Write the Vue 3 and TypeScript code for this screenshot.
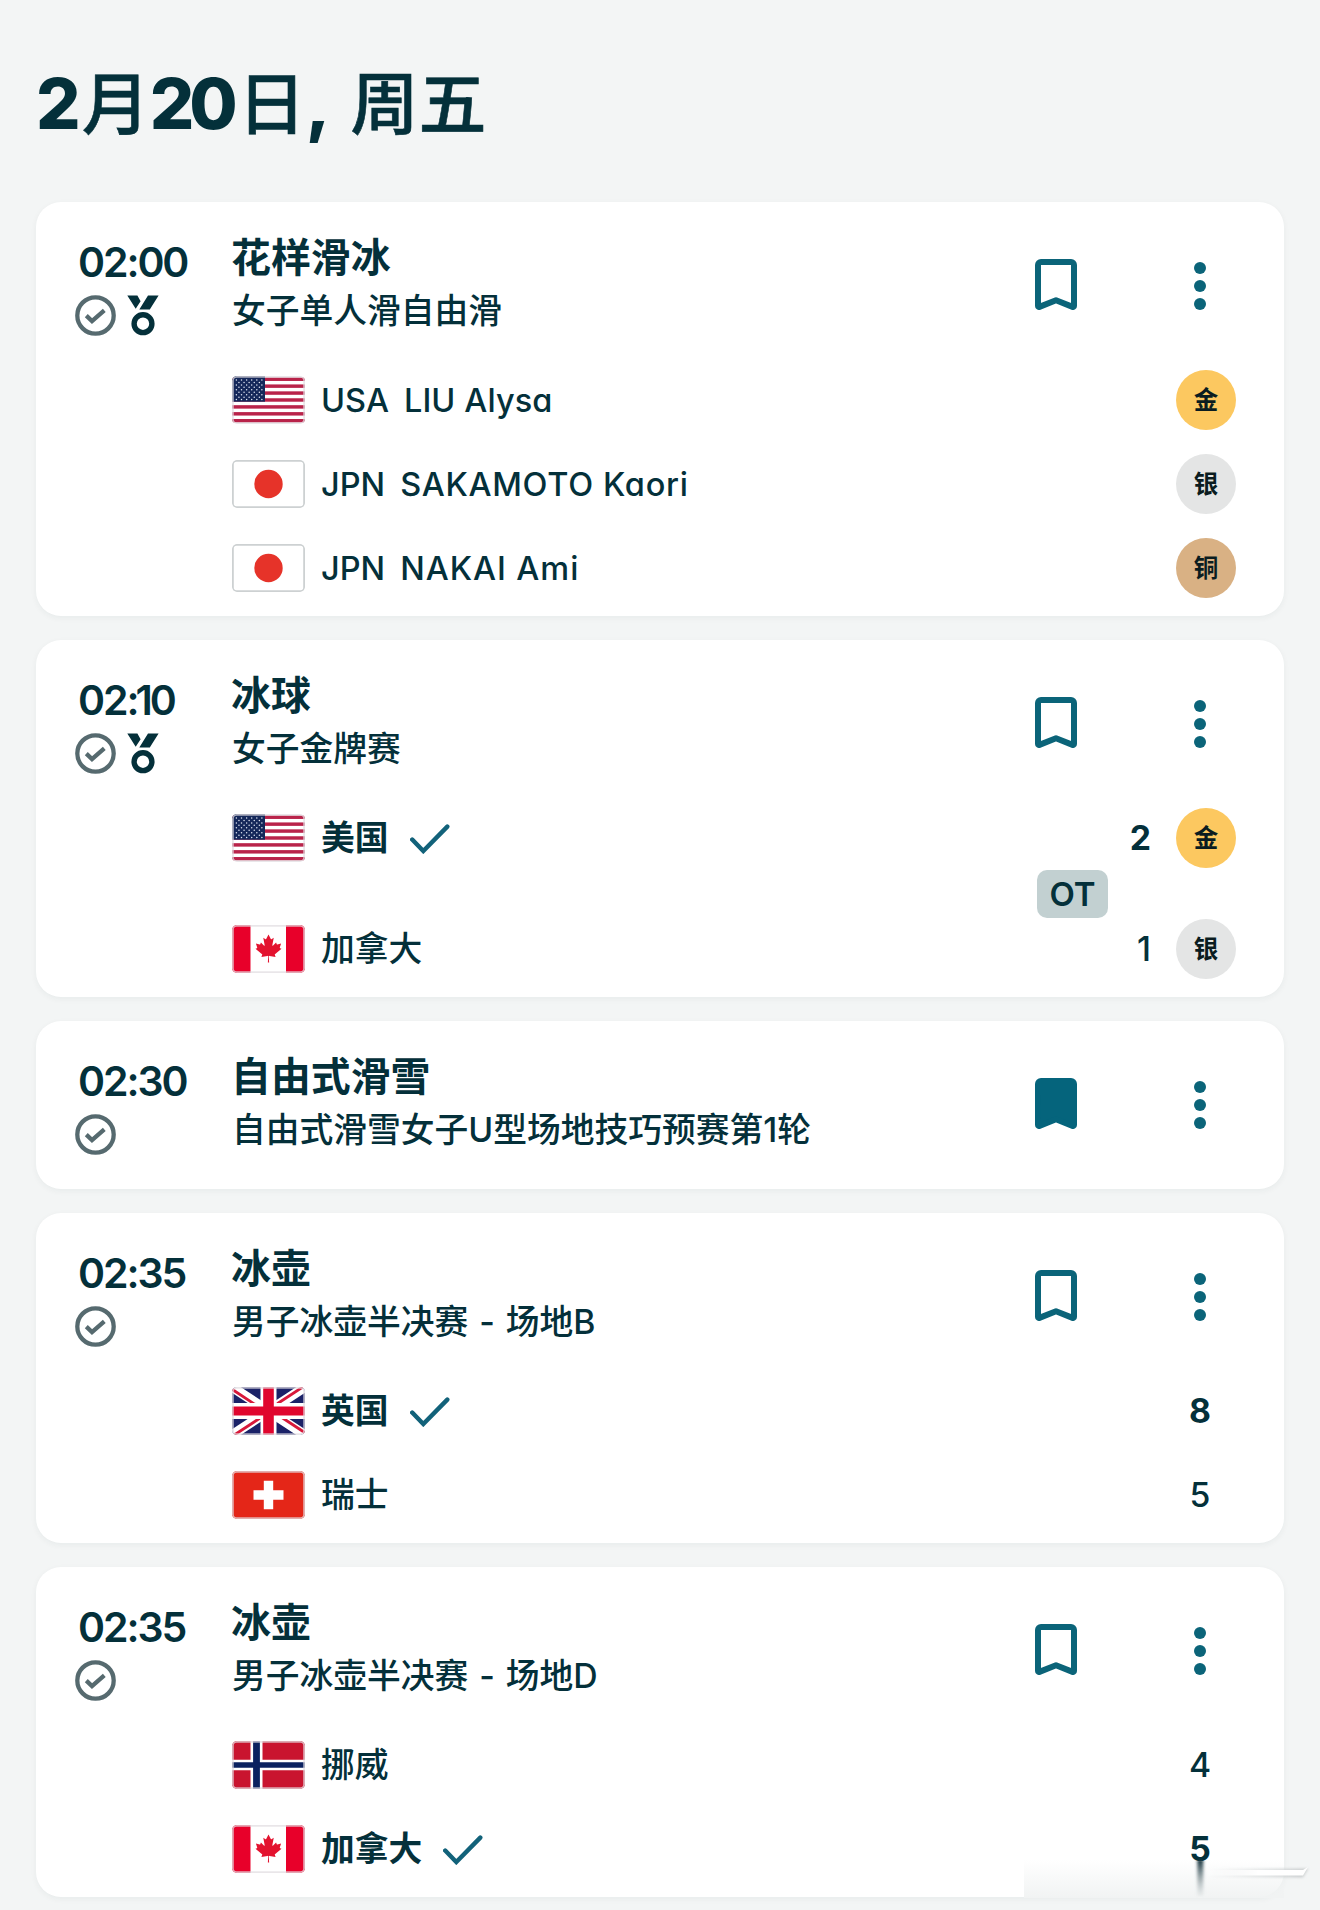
<script setup lang="ts">
type Country = 'us' | 'jp' | 'ca' | 'gb' | 'ch' | 'no'
type MedalKind = 'gold' | 'silver' | 'bronze'

interface Entry {
  flag: Country
  code?: string
  name: string
  tracking?: number
  winner?: boolean
  score?: string
  medal?: MedalKind
}

interface EventItem {
  time: string
  sport: string
  detail: string[]
  medalEvent?: boolean
  saved?: boolean
  overtime?: boolean
  entries: Entry[]
}

const medalLabel: Record<MedalKind, string> = { gold: '金', silver: '银', bronze: '铜' }

const events: EventItem[] = [
  {
    time: '02:00',
    sport: '花样滑冰',
    detail: ['女子单人滑自由滑'],
    medalEvent: true,
    entries: [
      { flag: 'us', code: 'USA', name: 'LIU Alysa', tracking: 0.1, medal: 'gold' },
      { flag: 'jp', code: 'JPN', name: 'SAKAMOTO Kaori', tracking: 0.7, medal: 'silver' },
      { flag: 'jp', code: 'JPN', name: 'NAKAI Ami', tracking: 0.95, medal: 'bronze' },
    ],
  },
  {
    time: '02:10',
    sport: '冰球',
    detail: ['女子金牌赛'],
    medalEvent: true,
    overtime: true,
    entries: [
      { flag: 'us', name: '美国', winner: true, score: '2', medal: 'gold' },
      { flag: 'ca', name: '加拿大', score: '1', medal: 'silver' },
    ],
  },
  {
    time: '02:30',
    sport: '自由式滑雪',
    detail: ['自由式滑雪女子U型场地技巧预赛第1轮'],
    saved: true,
    entries: [],
  },
  {
    time: '02:35',
    sport: '冰壶',
    detail: ['男子冰壶半决赛', '-', '场地B'],
    entries: [
      { flag: 'gb', name: '英国', winner: true, score: '8' },
      { flag: 'ch', name: '瑞士', score: '5' },
    ],
  },
  {
    time: '02:35',
    sport: '冰壶',
    detail: ['男子冰壶半决赛', '-', '场地D'],
    entries: [
      { flag: 'no', name: '挪威', score: '4' },
      { flag: 'ca', name: '加拿大', winner: true, score: '5' },
    ],
  },
]

// Star centres in the canton of the US flag: alternating rows of six and five.
const stars: { x: number; y: number }[] = []
for (let row = 0; row < 9; row++) {
  const count = row % 2 === 0 ? 6 : 5
  for (let i = 0; i < count; i++) {
    stars.push({ x: 4.4 + i * 5.1 + (row % 2 === 0 ? 0 : 2.55), y: 4 + row * 2.45 })
  }
}
</script>

<template>
  <main class="page">
    <h1 class="day">
      <span class="num">2</span><span class="han month">月</span><span class="num">20</span><span class="han date">日</span><span class="comma">,</span><span class="han week">周五</span>
    </h1>

    <section class="list">
      <article v-for="(ev, i) in events" :key="i" class="card" :class="{ bare: !ev.entries.length }">
        <header class="head">
          <div class="when">
            <div class="time"><span v-for="(ch, c) in ev.time" :key="c" :class="{ one: ch === '1' }">{{ ch }}</span></div>
            <div class="status">
              <svg class="done" viewBox="0 0 41 41">
                <circle cx="20.5" cy="20.5" r="18.2" />
                <path d="M11.3 20.6 17 26 29.3 15.3" />
              </svg>
              <svg v-if="ev.medalEvent" class="medal-icon" viewBox="0 0 32 41">
                <path d="M0.3 0.6H10.4L13.6 6.3 8.7 13.8ZM21 0.6H31.6L22.8 14.6H12.3Z" />
                <circle cx="16" cy="28.7" r="8.9" />
              </svg>
            </div>
          </div>
          <div class="what">
            <div class="sport">{{ ev.sport }}</div>
            <div class="detail"><span v-for="(part, p) in ev.detail" :key="p" :class="{ dash: part === '-' }">{{ part }}</span></div>
          </div>
          <svg class="bookmark" :class="{ saved: ev.saved }" viewBox="0 0 42 51">
            <path d="M3 6a3 3 0 0 1 3-3h30a3 3 0 0 1 3 3v41a1 1 0 0 1-1.4.9L21 41.3 4.4 47.9A1 1 0 0 1 3 47Z" />
          </svg>
          <svg class="more" viewBox="0 0 12 48">
            <circle cx="6" cy="6" r="6" /><circle cx="6" cy="24" r="6" /><circle cx="6" cy="42" r="6" />
          </svg>
        </header>

        <template v-for="(en, n) in ev.entries" :key="n">
          <div v-if="n === 1 && ev.overtime" class="period"><span class="ot">OT</span></div>
          <div class="entry" :class="{ winner: en.winner }">
            <svg class="flag" viewBox="0 0 73 48">
              <g v-if="en.flag === 'us'">
                <rect width="73" height="48" fill="#fff" />
                <rect v-for="s in 7" :key="s" x="0" :y="1.5 + (s - 1) * 6.92" width="73" height="3.46" fill="#b9234a" />
                <rect width="33" height="25.7" fill="#15285a" />
                <circle v-for="(st, k) in stars" :key="'s' + k" :cx="st.x" :cy="st.y" r="0.75" fill="#dfe5f2" />
              </g>
              <g v-else-if="en.flag === 'jp'">
                <rect width="73" height="48" fill="#fff" />
                <circle cx="36.5" cy="24" r="14.2" fill="#e63329" />
              </g>
              <g v-else-if="en.flag === 'ca'">
                <rect width="73" height="48" fill="#fff" />
                <path d="M0 0H18.5V48H0ZM54 0H73V48H54Z" fill="#e8002a" />
                <path
                  transform="translate(2.9 6.6) scale(0.007)"
                  fill="#e3132f"
                  d="m4890 4430-45-863a95 95 0 0 1 111-98l859 151-116-320a65 65 0 0 1 20-73l941-762-212-99a65 65 0 0 1-34-79l186-572-542 115a65 65 0 0 1-73-38l-105-247-423 454a65 65 0 0 1-111-57l204-1052-327 189a65 65 0 0 1-91-27l-332-652-332 652a65 65 0 0 1-91 27l-327-189 204 1052a65 65 0 0 1-111 57l-423-454-105 247a65 65 0 0 1-73 38l-542-115 186 572a65 65 0 0 1-34 79l-212 99 941 762a65 65 0 0 1 20 73l-116 320 859-151a95 95 0 0 1 111 98l-45 863z"
                />
              </g>
              <g v-else-if="en.flag === 'gb'">
                <rect width="73" height="48" fill="#1b2268" />
                <path d="M0 0 73 48M73 0 0 48" stroke="#fff" stroke-width="9.5" />
                <path d="M0 2.2 33 24M40 24 73 45.8M73 -1.5 38 21.5M35 26.5 0 49.5" stroke="#d8193a" stroke-width="2.8" />
                <path d="M36.5 0V48M0 24H73" stroke="#fff" stroke-width="16" />
                <path d="M36.5 0V48" stroke="#e0062e" stroke-width="10.6" />
                <path d="M0 24H73" stroke="#e0062e" stroke-width="8.8" />
              </g>
              <g v-else-if="en.flag === 'ch'">
                <rect width="73" height="48" fill="#e42618" />
                <path d="M36.5 9.8V38.2M21.5 24H51.5" stroke="#fff" stroke-width="9.4" />
              </g>
              <g v-else>
                <rect width="73" height="48" fill="#c9142f" />
                <path d="M24.5 0V48" stroke="#fff" stroke-width="12" />
                <path d="M0 24H73" stroke="#fff" stroke-width="10.6" />
                <path d="M24.5 0V48" stroke="#0b2260" stroke-width="6.8" />
                <path d="M0 24H73" stroke="#0b2260" stroke-width="5.6" />
              </g>
              <rect x="0.9" y="0.9" width="71.2" height="46.2" rx="3.6" class="edge" :class="{ solid: en.flag === 'jp' }" />
            </svg>
            <span v-if="en.code" class="code">{{ en.code }}</span>
            <span class="name" :class="{ latin: en.code }" :style="{ letterSpacing: (en.tracking ?? 0) + 'px' }">{{ en.name }}</span>
            <svg v-if="en.winner" class="tick" viewBox="0 0 40 30">
              <path d="M2.2 15.5 13.3 27 37.3 2.6" />
            </svg>
            <span class="result" :class="{ centred: !en.medal }">
              <span v-if="en.score" class="score">{{ en.score }}</span>
              <span v-if="en.medal" class="badge" :class="en.medal">{{ medalLabel[en.medal] }}</span>
            </span>
          </div>
        </template>
      </article>
    </section>

    <svg class="streak" viewBox="0 0 296 56">
      <defs>
        <linearGradient id="haze" x1="0" y1="0" x2="0" y2="1">
          <stop offset="0" stop-color="#f1f3f3" stop-opacity="0" />
          <stop offset="1" stop-color="#f1f3f3" />
        </linearGradient>
        <linearGradient id="stem" x1="0" y1="0" x2="0" y2="1">
          <stop offset="0" stop-color="#17343d" />
          <stop offset="1" stop-color="#9aa6a9" stop-opacity="0.1" />
        </linearGradient>
        <linearGradient id="blade" x1="0" y1="0" x2="1" y2="0">
          <stop offset="0" stop-color="#d5d9da" stop-opacity="0" />
          <stop offset="1" stop-color="#c8cccd" />
        </linearGradient>
        <linearGradient id="glint" x1="0" y1="0" x2="1" y2="0">
          <stop offset="0" stop-color="#fff" stop-opacity="0.3" />
          <stop offset="0.5" stop-color="#fff" />
        </linearGradient>
        <filter id="soft" x="-200%" y="-30%" width="500%" height="160%">
          <feGaussianBlur stdDeviation="1.5 0.9" />
        </filter>
      </defs>
      <rect x="0" y="6" width="260" height="38" fill="url(#haze)" />
      <rect x="173.3" y="6" width="6" height="36" fill="url(#stem)" filter="url(#soft)" />
      <path d="M184 14.5H284L279 23.5H184Z" fill="url(#blade)" filter="url(#soft)" />
      <path d="M184 16H279L284 13 279 21.5H184Z" fill="url(#glint)" />
    </svg>
  </main>
</template>

<style>
body {
  background: #f3f5f5;
}
</style>

<style scoped>
.page {
  position: relative;
  box-sizing: border-box;
  width: 1320px;
  height: 1910px;
  padding: 62px 36px 0;
  overflow: hidden;
  background: #f3f5f5;
  color: #04303a;
  font-family: Inter, 'Noto Sans CJK SC', sans-serif;
  font-feature-settings: 'cv11';
}

.day {
  display: flex;
  height: 80px;
  margin: 0 0 60px;
  line-height: 84px;
  font-size: 70px;
  font-weight: 800;
}
.num {
  letter-spacing: -5px;
}
.han {
  font-size: 68px;
  font-weight: 500;
  -webkit-text-stroke: 0.6px #04303a;
}
.month {
  margin: 0 0 0 6px;
}
.date {
  margin-left: 5px;
}
.week {
  margin-left: 20px;
}

.list {
  display: flex;
  flex-direction: column;
  gap: 24px;
}
.card {
  box-sizing: border-box;
  padding: 0 48px 6px 40px;
  border-radius: 25px;
  background: #fff;
  box-shadow: 0 2px 6px rgba(20, 50, 60, 0.05);
}
.card.bare {
  padding-bottom: 12px;
}

.head {
  display: flex;
  align-items: flex-start;
  height: 156px;
}
.when {
  width: 156px;
  padding-top: 36px;
}
.time {
  display: flex;
  height: 48px;
  padding-left: 2px;
  line-height: 48px;
  font-size: 41px;
  font-weight: 600;
  letter-spacing: -2.1px;
}
.one {
  margin: 0 -1px 0 -2px;
}
.status {
  display: flex;
  gap: 11px;
  margin: 9px 0 0 -0.7px;
}
.done {
  width: 41px;
  height: 41px;
  fill: none;
  stroke: #566a6f;
  stroke-width: 4.3;
}
.medal-icon {
  width: 32px;
  height: 41px;
  fill: #04303a;
}
.medal-icon circle {
  fill: none;
  stroke: #04303a;
  stroke-width: 5.4;
}

.what {
  flex: 1;
  padding-top: 29px;
}
.sport {
  height: 54px;
  margin-left: -1px;
  line-height: 54px;
  font-size: 39.9px;
  font-weight: 700;
}
.detail {
  display: flex;
  gap: 10px;
  height: 52px;
  line-height: 52px;
  font-size: 33.75px;
  font-weight: 500;
  white-space: nowrap;
}
.dash {
  width: 17.5px;
  text-align: center;
}

.bookmark {
  width: 42px;
  height: 51px;
  margin-top: 57px;
  fill: none;
  stroke: #0b6479;
  stroke-width: 6;
  stroke-linejoin: round;
}
.bookmark.saved {
  fill: #05647c;
  stroke: #05647c;
}
.more {
  width: 12px;
  height: 48px;
  margin: 60px 30px 0 117px;
  fill: #0b6479;
}

.entry {
  display: flex;
  align-items: center;
  height: 84px;
  padding-left: 156px;
  line-height: 84px;
  font-size: 33.75px;
  font-weight: 500;
}
.winner .name {
  font-weight: 700;
}
.winner .score {
  font-weight: 650;
}
.flag {
  width: 73px;
  height: 48px;
  margin-right: 16px;
  border-radius: 5px;
}
.edge {
  fill: none;
  stroke: rgba(226, 222, 226, 0.75);
  stroke-width: 1.8;
}
.edge.solid {
  stroke: #cdd1d2;
}
.code,
.latin {
  padding-top: 2px;
  font-size: 32.5px;
}
.code {
  margin-right: 15px;
}
.tick {
  width: 40px;
  height: 30px;
  margin: 1px 0 0 21px;
  fill: none;
  stroke: #12627a;
  stroke-width: 4.4;
  stroke-linecap: round;
}
.result {
  display: flex;
  align-items: center;
  justify-content: flex-end;
  gap: 25px;
  margin-left: auto;
}
.centred {
  justify-content: center;
  width: 72px;
}
.badge {
  width: 60px;
  height: 60px;
  border-radius: 50%;
  color: #0a1c20;
  font-size: 24.5px;
  font-weight: 700;
  line-height: 61px;
  text-align: center;
}
.gold {
  background: #fcc860;
}
.silver {
  background: #e4e5e5;
}
.bronze {
  background: #d9b184;
}
.period {
  display: flex;
  align-items: center;
  justify-content: flex-end;
  height: 27px;
  padding-right: 128px;
}
.ot {
  flex: none;
  width: 71px;
  height: 48px;
  border-radius: 10px;
  background: #c2d0d1;
  font-size: 33px;
  font-weight: 600;
  line-height: 49px;
  text-align: center;
}

.streak {
  position: absolute;
  right: 0;
  bottom: 0;
  width: 296px;
  height: 56px;
}
</style>
